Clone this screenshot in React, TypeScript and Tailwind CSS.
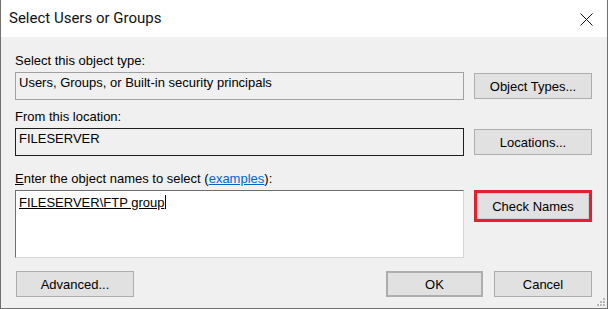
import React from "react";

const SANS = "font-['Liberation_Sans',Arial,sans-serif]";

const Button = ({
  label,
  className = "",
}: {
  label: React.ReactNode;
  className?: string;
}) => (
  <div
    className={`flex h-[26px] items-center justify-center border border-[#adadad] bg-[#e1e1e1] text-[13px] leading-none text-black ${className}`}
  >
    {label}
  </div>
);

const Grip = () => (
  <svg width="9" height="9" viewBox="0 0 9 9" className="block">
    {[
      [6, 0],
      [3, 3],
      [6, 3],
      [0, 6],
      [3, 6],
      [6, 6],
    ].map(([x, y]) => (
      <rect key={`${x}-${y}`} x={x} y={y} width="2" height="2" fill="#b9b9b9" />
    ))}
  </svg>
);

export default function App() {
  return (
    <div
      className={`flex h-[309px] w-[608px] flex-col border-x border-b border-[#707070] bg-[#f0f0f0] ${SANS}`}
    >
      {/* title bar */}
      <div className="flex h-[37px] shrink-0 items-center justify-between bg-white pl-[8px] pr-[14px]">
        <span className="font-['Roboto',sans-serif] text-[15px] text-[#111]">
          Select Users or Groups
        </span>
        <svg width="13" height="13" viewBox="0 0 13 13" className="mt-[1px]">
          <path d="M0.5 0.5 L12.5 12.5 M12.5 0.5 L0.5 12.5" stroke="#111" strokeWidth="1" />
        </svg>
      </div>

      <div className="flex flex-1 flex-col pl-[14px] pr-[15px] text-[13px] text-black">
        <div className="mt-[16px] h-[16px] leading-[16px]">Select this object type:</div>
        <div className="mt-[3px] flex items-center gap-[10px]">
          <div className="h-[28px] w-[449px] border border-[#a0a0a0] pl-[3px] pt-[2px] leading-[16px]">
            Users, Groups, or Built-in security principals
          </div>
          <Button label="Object Types..." className="w-[118px]" />
        </div>

        <div className="mt-[9px] h-[16px] leading-[16px]">From this location:</div>
        <div className="mt-[3px] flex items-center gap-[10px]">
          <div className="h-[28px] w-[449px] border border-[#1e1e1e] pl-[3px] pt-[2px] leading-[16px]">
            FILESERVER
          </div>
          <Button label="Locations..." className="w-[118px]" />
        </div>

        <div className="mt-[15px] h-[16px] leading-[16px]">
          <span className="underline">E</span>nter the object names to select (
          <span className="text-[#0066cc] underline">examples</span>):
        </div>
        <div className="mt-[3px] flex items-start gap-[10px]">
          <div className="h-[68px] w-[449px] border-l border-t border-[#6e6e6e] border-r-[#d6d6d6] border-b-[#d6d6d6] border-r border-b bg-white pl-[3px] pt-[2px] leading-[16px]">
            <span className="underline">FILESERVER\FTP group</span>
            <span className="ml-[1px] inline-block h-[14px] w-px translate-y-[2px] bg-black" />
          </div>
          <div className="border-[3px] border-[#e3202c]">
            <Button label="Check Names" className="h-[20px] w-[112px] border-[#cfcfcf]" />
          </div>
        </div>

        <div className="mt-[13px] flex items-center">
          <Button label="Advanced..." className="ml-[1px] w-[118px]" />
          <div className="flex-1" />
          <Button label="OK" className="w-[97px] border-2 border-[#0078d7]" />
          <Button label="Cancel" className="ml-[11px] w-[98px]" />
        </div>
        <div className="mt-auto mb-[1px] mr-[-14px] flex justify-end">
          <Grip />
        </div>
      </div>
    </div>
  );
}
